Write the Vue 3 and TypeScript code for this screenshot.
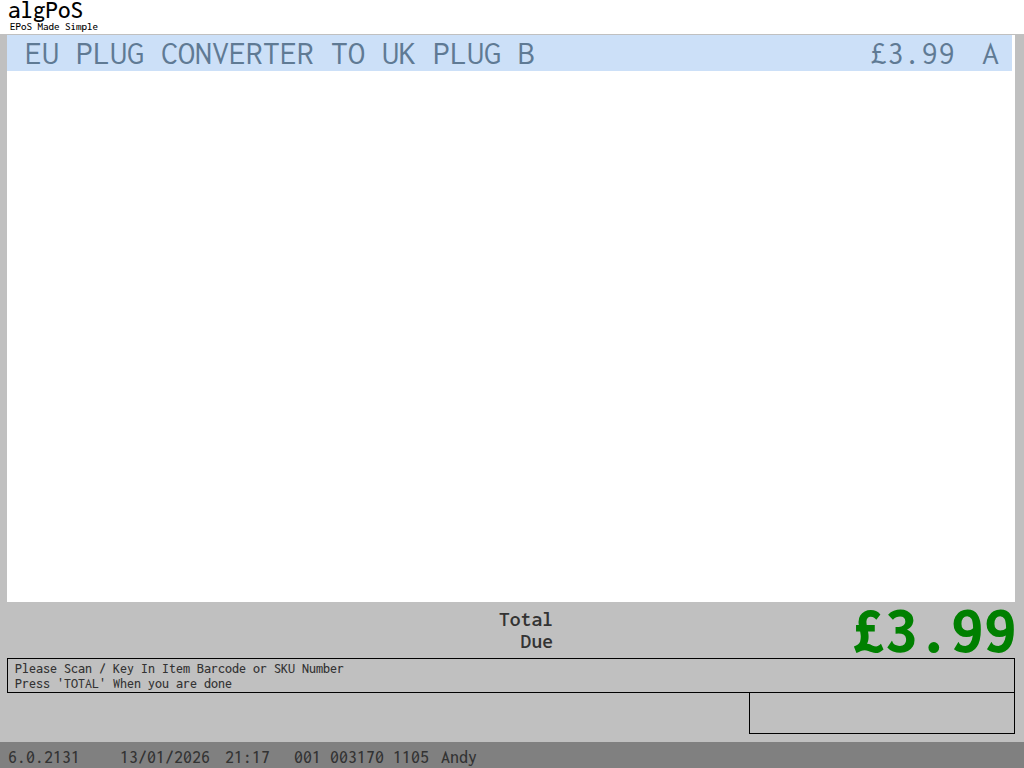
<script setup lang="ts">
const sale = {
  name: 'EU PLUG CONVERTER TO UK PLUG B',
  price: '£3.99',
  tax: 'A',
}
</script>

<template>
  <div class="till">
    <header class="brand">
      <div class="brand__name">algPoS</div>
      <div class="brand__tag">EPoS Made Simple</div>
    </header>

    <main class="lines">
      <div class="line">
        <span class="line__name">{{ sale.name }}</span>
        <span class="line__price">{{ sale.price }}</span>
        <span class="line__tax">{{ sale.tax }}</span>
      </div>
    </main>

    <section class="total">
      <div class="total__label">Total<br />Due</div>
      <div class="total__amount">£3.99</div>
    </section>

    <section class="prompt">
      Please Scan / Key In Item Barcode or SKU Number<br />
      Press 'TOTAL' When you are done
    </section>

    <section class="extra">
      <div class="extra__box" />
    </section>

    <footer class="status">
      <span class="status__version">6.0.2131</span>
      <span class="status__date">13/01/2026</span>
      <span class="status__time">21:17</span>
      <span class="status__ids">001 003170 1105</span>
      <span>Andy</span>
    </footer>
  </div>
</template>

<style>
html,
body {
  margin: 0;
  background: #c0c0c0;
}
</style>

<style scoped>
.till {
  width: 1024px;
  height: 768px;
  display: flex;
  flex-direction: column;
  overflow: hidden;
  background: #c0c0c0;
  font-family: "Inconsolata", "DejaVu Sans Mono", monospace;
  color: #333;
}

.brand {
  height: 34px;
  flex: none;
  padding-left: 8px;
  background: #fff;
  color: #000;
}

.brand__name {
  height: 21px;
  font-size: 25px;
  line-height: 21px;
  font-weight: 500;
}

.brand__tag {
  padding-left: 2px;
  font-size: 11px;
  line-height: 11px;
  font-weight: 500;
}

.lines {
  flex: none;
  height: 567px;
  margin: 1px 9px 0 7px;
  background: #fff;
}

.line {
  height: 36px;
  margin-right: 3px;
  padding: 0 13px 2px 18px;
  box-sizing: border-box;
  display: flex;
  align-items: center;
  background: #cce0f8;
  color: #5f7a94;
  font-size: 34px;
}

.line__name {
  flex: 1;
}

.line__tax {
  margin-left: 27px;
}

.total {
  height: 56px;
  flex: none;
  position: relative;
  padding-right: 7px;
  display: flex;
  justify-content: flex-end;
  align-items: center;
}

.total__label {
  position: absolute;
  left: 400px;
  top: 6px;
  width: 153px;
  text-align: right;
  font-size: 21.6px;
  line-height: 21.6px;
  font-weight: 600;
}

.total__amount {
  color: #008000;
  font-size: 66px;
  font-weight: 800;
  line-height: 54px;
}

.prompt {
  height: 35px;
  box-sizing: border-box;
  flex: none;
  margin: 0 9px 0 7px;
  padding: 2px 7px 0;
  border: 1px solid #000;
  font-size: 14px;
  line-height: 15px;
  font-weight: 500;
}

.extra {
  height: 49px;
  flex: none;
  display: flex;
  justify-content: flex-end;
  padding-right: 9px;
}

.extra__box {
  width: 266px;
  height: 41px;
  box-sizing: border-box;
  border: 1px solid #000;
  border-top: 0;
}

.status {
  height: 26px;
  flex: none;
  padding: 3px 0 0 8px;
  box-sizing: border-box;
  display: flex;
  align-items: center;
  background: #808080;
  font-size: 18px;
  font-weight: 500;
}

.status__version {
  width: 112px;
}

.status__date {
  width: 105px;
}

.status__time {
  width: 69px;
}

.status__ids {
  width: 147px;
}
</style>
